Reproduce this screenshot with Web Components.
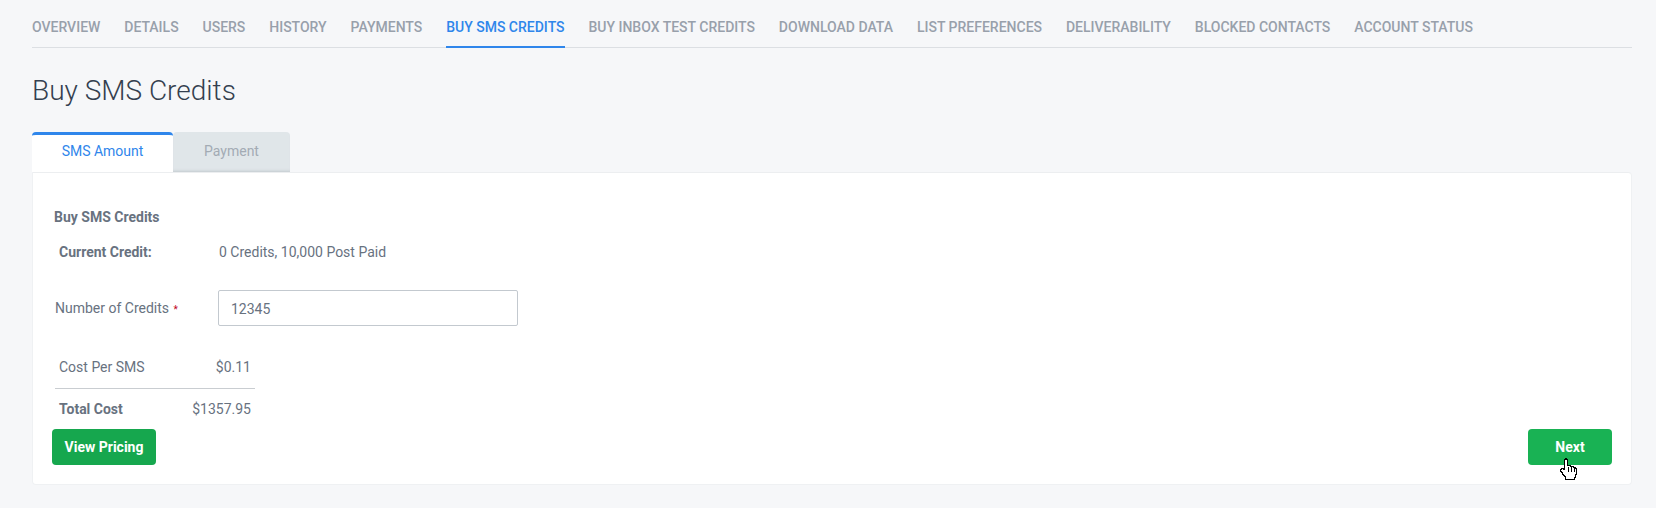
<!DOCTYPE html>
<html>
<head>
<meta charset="utf-8">
<title>Buy SMS Credits</title>
<style>
    html, body { margin: 0; background: #f6f7f9; }
    body { font-family: Roboto, "Liberation Sans", sans-serif; font-size: 13px; color: #68727f; }
</style>
</head>
<body>
<account-page>
    <account-nav slot="nav">
        <nav-link>Overview</nav-link>
        <nav-link>Details</nav-link>
        <nav-link>Users</nav-link>
        <nav-link>History</nav-link>
        <nav-link>Payments</nav-link>
        <nav-link active>Buy SMS Credits</nav-link>
        <nav-link>Buy Inbox Test Credits</nav-link>
        <nav-link>Download Data</nav-link>
        <nav-link>List Preferences</nav-link>
        <nav-link>Deliverability</nav-link>
        <nav-link>Blocked Contacts</nav-link>
        <nav-link>Account Status</nav-link>
    </account-nav>
    <wizard-tabs slot="tabs"></wizard-tabs>
    <credits-form slot="panel"></credits-form>
</account-page>

<script>
(function () {
    const pageTemplate = document.createElement("template");
    pageTemplate.innerHTML = `
    <style>
    :host { display: block; padding: 0 24px 23px 32px; }
    h1 {
        margin: 26px 0 24px;
        font-size: 28px;
        line-height: 34px;
        font-weight: 300;
        color: #343f4f;
    }
    </style>
    <slot name="nav"></slot>
    <h1>Buy SMS Credits</h1>
    <slot name="tabs"></slot>
    <slot name="panel"></slot>
    `;

    class AccountPage extends HTMLElement {
        constructor() {
            super();
            this.attachShadow({mode: "open"}).appendChild(pageTemplate.content.cloneNode(true));
        }
    }

    const navTemplate = document.createElement("template");
    navTemplate.innerHTML = `
    <style>
    :host {
        display: flex;
        gap: 23.9px;
        height: 47px;
        border-bottom: 1px solid #dcdfe3;
        box-sizing: content-box;
    }
    </style>
    <slot></slot>
    `;

    class AccountNav extends HTMLElement {
        constructor() {
            super();
            this.attachShadow({mode: "open"}).appendChild(navTemplate.content.cloneNode(true));
        }
    }

    const linkTemplate = document.createElement("template");
    linkTemplate.innerHTML = `
    <style>
    :host {
        display: block;
        height: 48px;
        box-sizing: border-box;
        padding-top: 19px;
        font-size: 14px;
        line-height: 16px;
        font-weight: 500;
        text-transform: uppercase;
        white-space: nowrap;
        color: #98a0ab;
    }
    :host([active]) {
        color: #2f86eb;
        border-bottom: 2px solid #2f86eb;
    }
    </style>
    <slot></slot>
    `;

    class NavLink extends HTMLElement {
        constructor() {
            super();
            this.attachShadow({mode: "open"}).appendChild(linkTemplate.content.cloneNode(true));
        }
    }

    const tabsTemplate = document.createElement("template");
    tabsTemplate.innerHTML = `
    <style>
    :host { display: flex; height: 40px; font-size: 14px; }
    div {
        box-sizing: border-box;
        display: flex;
        align-items: center;
        justify-content: center;
        padding-bottom: 3px;
        border-radius: 4px 4px 0 0;
    }
    .active {
        width: 141px;
        padding-bottom: 5px;
        background: #fff;
        border-top: 3px solid #2f86eb;
        color: #2f86eb;
    }
    .idle {
        width: 117px;
        background: #e0e6e9;
        box-shadow: inset 0 -3px 3px -2px #c2c9ce;
        color: #a3abb4;
    }
    </style>
    <div class="active">SMS Amount</div>
    <div class="idle">Payment</div>
    `;

    class WizardTabs extends HTMLElement {
        constructor() {
            super();
            this.attachShadow({mode: "open"}).appendChild(tabsTemplate.content.cloneNode(true));
        }
    }

    const formTemplate = document.createElement("template");
    formTemplate.innerHTML = `
    <style>
    :host {
        display: block;
        position: relative;
        box-sizing: border-box;
        height: 313px;
        padding: 36px 19px 0 19px;
        background: #fff;
        border: 1px solid #eff1f3;
        border-top-color: #eceef0;
        border-radius: 0 4px 4px 4px;
        font-size: 14px;
        line-height: 16px;
    }
    h2 {
        margin: 0 0 19px 2px;
        font-size: 14px;
        line-height: 16px;
        font-weight: 700;
    }
    .current { display: flex; padding-left: 7px; }
    .current b { width: 160px; font-weight: 700; }
    .credits { display: flex; align-items: center; margin: 30px 0 0 3px; height: 36px; }
    .credits label { width: 163px; padding-top: 2px; }
    .credits i { color: #c0021b; font-style: normal; font-size: 10px; margin-left: 1px; }
    input {
        box-sizing: border-box;
        width: 300px;
        height: 36px;
        padding: 2px 12px 0;
        border: 1px solid #c3c9cf;
        border-radius: 2px;
        background: #fff;
        font: inherit;
        color: #68727f;
        outline: 0;
    }
    .costs { width: 200px; margin: 33px 0 0 3px; }
    .costs div {
        display: flex;
        justify-content: space-between;
        padding: 0 4px;
    }
    .costs .per { padding-bottom: 13px; border-bottom: 1px solid #c9cdd1; }
    .costs .total { padding-top: 12px; }
    .costs b { font-weight: 700; }
    .actions { display: flex; justify-content: space-between; margin-top: 12px; }
    </style>
    <h2>Buy SMS Credits</h2>
    <div class="current"><b>Current Credit:</b><span>0 Credits, 10,000 Post Paid</span></div>
    <div class="credits">
        <label>Number of Credits <i>*</i></label>
        <input type="text" value="12345">
    </div>
    <div class="costs">
        <div class="per"><span>Cost Per SMS</span><span>$0.11</span></div>
        <div class="total"><b>Total Cost</b><span>$1357.95</span></div>
    </div>
    <div class="actions">
        <green-button>View Pricing</green-button>
        <green-button wide light>Next</green-button>
    </div>
    <hand-cursor></hand-cursor>
    `;

    class CreditsForm extends HTMLElement {
        constructor() {
            super();
            this.attachShadow({mode: "open"}).appendChild(formTemplate.content.cloneNode(true));
        }
    }

    const buttonTemplate = document.createElement("template");
    buttonTemplate.innerHTML = `
    <style>
    :host {
        display: flex;
        align-items: center;
        justify-content: center;
        box-sizing: border-box;
        height: 36px;
        width: 104px;
        background: #16a74e;
        border-radius: 4px;
        font-size: 14px;
        font-weight: 700;
        color: #fff;
        cursor: pointer;
    }
    :host([wide]) { width: 84px; }
    :host([light]) { background: #19b254; }
    </style>
    <slot></slot>
    `;

    class GreenButton extends HTMLElement {
        constructor() {
            super();
            this.attachShadow({mode: "open"}).appendChild(buttonTemplate.content.cloneNode(true));
        }
    }

    // mouse pointer caught in the screenshot, sits over the Next button
    const cursorTemplate = document.createElement("template");
    cursorTemplate.innerHTML = `
    <style>
    :host { position: absolute; left: 1527px; top: 285px; width: 18px; height: 23px; line-height: 0; }
    </style>
    <svg width="18" height="23" viewBox="0 0 18 23" shape-rendering="crispEdges">
        <path d="M4.500 1.500h1v-1h1v1h1v6h3v1h3v1h2v1h1v6h-1v3h-1v2h-9v-3h-1v-1h-1v-1h-1v-2h-1v-1h-1v-2h1v-1h2v1h1z" fill="#fff" stroke="#000"/>
        <path d="M8.500 9v5M11.500 9v5M14.500 10v4" stroke="#000" fill="none"/>
    </svg>
    `;

    class HandCursor extends HTMLElement {
        constructor() {
            super();
            this.attachShadow({mode: "open"}).appendChild(cursorTemplate.content.cloneNode(true));
        }
    }

    customElements.define("account-page", AccountPage);
    customElements.define("account-nav", AccountNav);
    customElements.define("nav-link", NavLink);
    customElements.define("wizard-tabs", WizardTabs);
    customElements.define("credits-form", CreditsForm);
    customElements.define("green-button", GreenButton);
    customElements.define("hand-cursor", HandCursor);
}());
</script>
</body>
</html>
